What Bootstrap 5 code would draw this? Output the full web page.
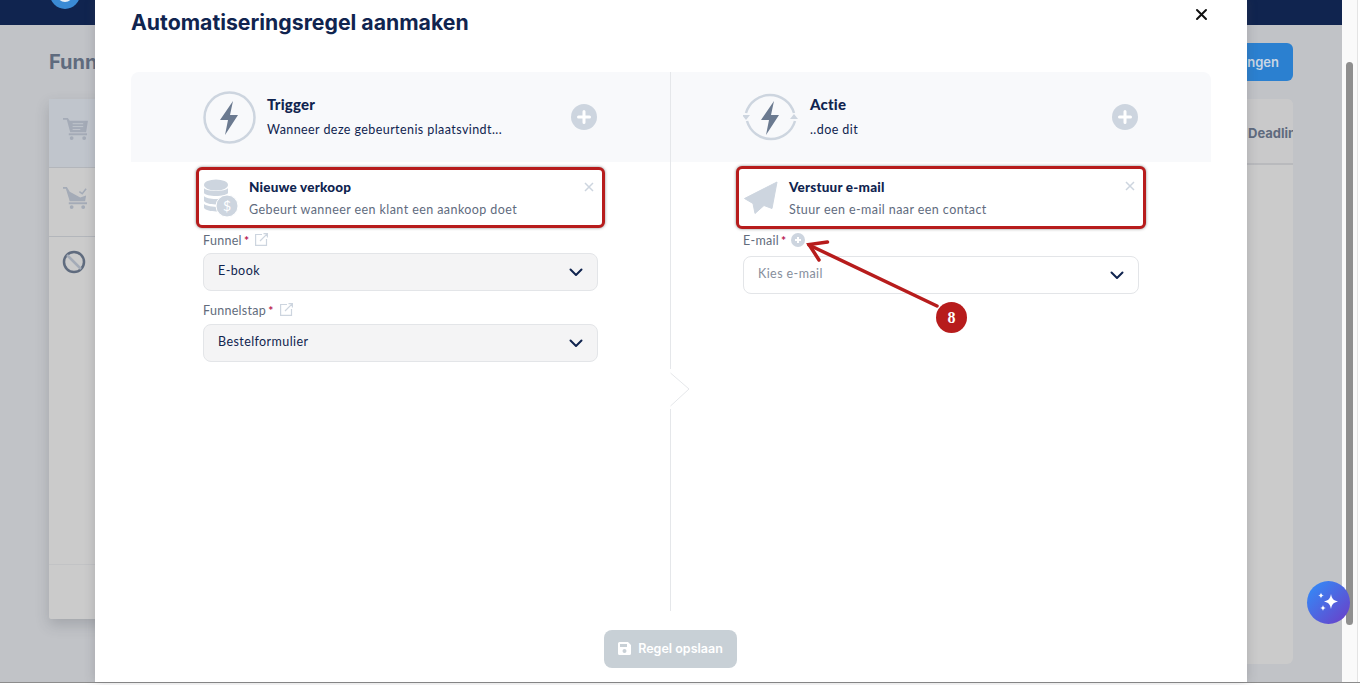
<!DOCTYPE html>
<html lang="nl">
<head>
  <meta charset="UTF-8" />
  <meta name="viewport" content="width=device-width, initial-scale=1" />
  <title>Automatiseringsregel aanmaken</title>
  <link href="https://cdn.jsdelivr.net/npm/bootstrap@5.3.2/dist/css/bootstrap.min.css" rel="stylesheet" />
  <style>
    html, body { height: 100%; overflow: hidden; }
    body { background: #fff; font-family: "Lato", "Liberation Sans", sans-serif; color: #10244f; position: relative; }

    /* pagina achter de modal */
    .app-shell { width: 1342px; height: 682px; background: #c1c3c7; overflow: hidden; }
    .app-bar { height: 25px; background: #10244f; padding-left: 50px; overflow: hidden; }
    .app-logo { width: 30px; height: 30px; margin-top: -21px; border-radius: 50%; background: #3a8ad4; padding: 7px; }
    .app-logo-mark { width: 16px; height: 16px; border-radius: 50%; background: #e6eef6; }
    .app-main { padding: 18px 49px 0; }
    .page-title { font-family: "Inter", sans-serif; font-size: 20px; font-weight: 700; color: #5f6b7e; margin: 0; line-height: 38px; }
    .save-top { width: 120px; height: 38px; background: #2b80d0; border-radius: 6px; font: 600 13px/38px "Inter", sans-serif; color: #c9d6e4; text-align: right; padding-right: 14px; }
    .cards-wrap { margin-top: 18px; gap: 20px; }
    .side-card { width: 600px; height: 520px; background: #cbcbcb; border-radius: 2px; box-shadow: 0 6px 14px rgba(60, 64, 72, .22); }
    .side-row { height: 69px; border-bottom: 1px solid #b3b6bb; padding: 16px 0 0 14px; }
    .side-row.active { background: #c0c5cc; }
    .side-row.tall { height: 328px; padding: 11px 0 0 13px; border-bottom-color: #c2c3c5; }
    .deadline-card { width: 624px; height: 565px; background: #cbcbcb; border-radius: 6px; }
    .deadline-head { height: 66px; border-bottom: 2px solid #b9babd; background: #c9c9ca; border-radius: 6px 6px 0 0; margin-bottom: 3px; }
    .deadline-clip { width: 45px; overflow: hidden; white-space: nowrap; font: 700 13px/68px "Inter", sans-serif; color: #5f6b7e; }

    /* scrollbalk */
    .scroll-track { position: absolute; left: 1342px; top: 0; width: 16px; height: 682px; background: #fafafa; border-right: 1px solid #e4e4e4; }
    .scroll-thumb { position: absolute; left: 4px; top: 62px; width: 7px; height: 563px; border-radius: 4px; background: #8f8f8f; }
    .page-line { position: absolute; left: 0; top: 682px; width: 1360px; height: 1px; background: #8c8c8c; }
    .ai-button { position: absolute; left: 1307px; top: 581px; width: 43px; height: 43px; border-radius: 50%; background: linear-gradient(135deg, #2f90fb, #6d3cc6); }

    /* modal */
    .rule-modal { position: absolute; left: 95px; top: 0; width: 1152px; height: 682px; background: #fff; padding: 0 36px; box-shadow: 0 0 10px rgba(70, 72, 80, .25); }
    .rule-title { font-family: "Inter", sans-serif; font-size: 21.25px; font-weight: 700; color: #10244f; line-height: 44px; margin: 0; height: 72px; }
    .rule-close { position: absolute; left: 1100px; top: 8px; width: 13px; height: 13px; }
    .rule-grid { height: 539px; }
    .rule-col { width: 539px; flex: none; }
    .rule-col + .rule-col { width: 541px; border-left: 1px solid #e5e7ea; position: relative; }
    .rule-head { height: 90px; background: #f8f9fb; padding: 0 72px; }
    .rule-col:first-child .rule-head { border-radius: 8px 0 0 0; }
    .rule-col:last-child .rule-head { border-radius: 0 8px 0 0; }
    .rule-head-text { margin-left: 11px; padding-bottom: 1px; }
    .rule-col + .rule-col .rule-head-text { margin-left: 12px; }
    .rule-head-title { font-size: 15px; font-weight: 900; line-height: 18px; margin-bottom: 9px; letter-spacing: .2px; }
    .rule-head-sub { font-size: 12.5px; line-height: 16px; letter-spacing: .42px; }
    .plus-ico { margin-right: 1px; flex: none; }
    .rule-body { padding: 5px 72px 0; }
    .rule-item { height: 61px; margin: 0 -7px 0 -7px; border: 3px solid #b71c1c; border-radius: 6px; box-shadow: 0 0 3px rgba(40, 40, 40, .55); padding: 0 4px; position: relative; background: #fff; }
    .rule-item.raised { height: 63px; margin-top: -1px; }
    .rule-item-icon { width: 36px; flex: none; margin-right: 10px; }
    .rule-item-text { padding-top: 2px; }
    .rule-item-title { font-size: 13.5px; font-weight: 900; line-height: 17px; margin-bottom: 6px; letter-spacing: .2px; }
    .rule-item-sub { font-size: 12.5px; line-height: 16px; color: #5f6b7e; letter-spacing: .42px; }
    .rule-item-x { position: absolute; right: 8px; top: 12px; width: 10px; height: 10px; }
    .field-label { font-size: 12.5px; line-height: 16px; color: #626c7c; letter-spacing: .3px; height: 25px; padding-top: 5px; display: flex; align-items: flex-start; margin: 0; }
    .field-label.second { margin-top: 8px; padding-top: 4px; }
    .field-label.third { height: 27px; padding-top: 4px; }
    .req { color: #b8174f; margin-left: 2px; font-size: 12px; font-weight: 700; }
    .link-ico { margin-left: 6px; }
    .rule-select.form-select { height: 38px; font-size: 12.5px; letter-spacing: .42px; color: #10244f; background-color: #f4f4f5; border: 1px solid #e3e5e8; border-radius: 8px; padding: 0 14px 2px; box-shadow: none;
      background-image: url("data:image/svg+xml,%3csvg xmlns='http://www.w3.org/2000/svg' viewBox='0 0 14 9'%3e%3cpath fill='none' stroke='%2310244f' stroke-width='2' stroke-linecap='round' stroke-linejoin='round' d='M1.5 1.5 7 7l5.5-5.5'/%3e%3c/svg%3e");
      background-size: 14px 9px; background-position: right 14px center; }
    .rule-select.is-empty { background-color: #fff; color: #868e9c; }
    .rule-notch { position: absolute; left: -1px; top: 297px; width: 22px; height: 40px; background: #fff; }
    .rule-footer { margin-top: 19px; }
    .btn.rule-save { width: 133px; height: 38px; margin-left: -1px; padding: 0 0 2px; background: #c8d0d6; border: 0; border-radius: 8px; color: #fff; font: 600 12.5px "Inter", sans-serif; opacity: 1; gap: 7px; }

    /* annotatie */
    .note-arrow { position: absolute; left: 800px; top: 235px; width: 150px; height: 80px; pointer-events: none; }
    .note-badge { position: absolute; left: 936px; top: 302px; width: 31px; height: 31px; border-radius: 50%; background: #b71c1c; color: #fff; font: 700 16px/31px "Liberation Serif", serif; text-align: center; }
  </style>
</head>
<body>
  <!-- Pagina achter de modal -->
  <div class="app-shell">
    <div class="app-bar"><div class="app-logo"><div class="app-logo-mark"></div></div></div>
    <div class="app-main">
      <div class="d-flex justify-content-between">
        <h1 class="page-title">Funnels</h1>
        <div class="save-top">Instellingen</div>
      </div>
      <div class="d-flex align-items-start cards-wrap">
        <div class="side-card">
          <div class="side-row active">
            <svg width="25" height="25" viewBox="0 0 26 26" fill="#a4abb7"><path d="M0 2h5l2 3h19l-2 12H7.500L4 4H0z"/><path d="M10 8h11M10 11h11M10 14h8" stroke="#c0c5cc"/><rect x="6" y="18" width="19" height="2"/><circle cx="9" cy="23" r="2"/><circle cx="22" cy="23" r="2"/></svg>
          </div>
          <div class="side-row">
            <svg width="25" height="25" viewBox="0 0 26 26" fill="#a4abb7"><path d="M0 2h4l3 5 11 6 6-2-1 6H7L3 4H0z"/><path d="M17 7l3 2 4-5" fill="none" stroke="#a4abb7" stroke-width="1.600"/><rect x="6" y="18" width="19" height="2"/><circle cx="9" cy="23" r="2"/><circle cx="21" cy="23" r="2"/></svg>
          </div>
          <div class="side-row tall">
            <svg width="24" height="24" viewBox="0 0 24 24" fill="none" stroke="#5f6b7e" stroke-width="2.500"><circle cx="12" cy="12" r="10"/><path d="M5 5l14 14" stroke="#a4abb7"/></svg>
          </div>
        </div>
        <div class="deadline-card">
          <div class="deadline-head d-flex justify-content-end"><div class="deadline-clip">Deadlines</div></div>
        </div>
      </div>
    </div>
  </div>

  <div class="scroll-track"><div class="scroll-thumb"></div></div>
  <div class="page-line"></div>

  <!-- Modal -->
  <div class="rule-modal">
    <h2 class="rule-title">Automatiseringsregel aanmaken</h2>
    <svg class="rule-close" viewBox="0 0 13 13"><path d="M2 2l9 9M11 2l-9 9" stroke="#111" stroke-width="2" stroke-linecap="round"/></svg>

    <div class="d-flex rule-grid">
      <!-- Trigger -->
      <div class="rule-col">
        <div class="rule-head d-flex align-items-center">
          <svg width="53" height="53" viewBox="0 0 53 53"><circle cx="26.500" cy="26.500" r="25" fill="none" stroke="#cdd5df" stroke-width="2.500"/><path d="M30 10 17 29h8l-3 15 13-20h-8z" fill="#6b7a90"/></svg>
          <div class="rule-head-text flex-grow-1">
            <div class="rule-head-title">Trigger</div>
            <div class="rule-head-sub">Wanneer deze gebeurtenis plaatsvindt...</div>
          </div>
          <svg class="plus-ico" width="26" height="26" viewBox="0 0 26 26"><circle cx="13" cy="13" r="13" fill="#cdd5df"/><path d="M13 7.500v11M7.500 13h11" stroke="#fff" stroke-width="3" stroke-linecap="round"/></svg>
        </div>
        <div class="rule-body">
          <div class="rule-item d-flex align-items-center">
            <div class="rule-item-icon">
              <svg width="36" height="38" viewBox="0 0 36 38" fill="#cdd5df"><ellipse cx="13" cy="6" rx="12" ry="5.500"/><path d="M1 9c2 4 22 4 24 0v5c-2 4-22 4-24 0zM1 17c2 3 14 4 18 2l-2 6c-6 1-14 0-16-3zM1 25c2 2 9 3 15 3l2 4c-6 1-15 0-17-3z"/><circle cx="24" cy="27" r="11" stroke="#fff" stroke-width="1"/><text x="24" y="32" font-size="14" font-family="Lato, sans-serif" fill="#fff" text-anchor="middle">$</text></svg>
            </div>
            <div class="rule-item-text">
              <div class="rule-item-title">Nieuwe verkoop</div>
              <div class="rule-item-sub">Gebeurt wanneer een klant een aankoop doet</div>
            </div>
            <svg class="rule-item-x" viewBox="0 0 10 10"><path d="M1 1l8 8M9 1 1 9" stroke="#cdd5df" stroke-width="1.500"/></svg>
          </div>
          <label class="field-label">Funnel<span class="req">*</span>
            <svg class="link-ico" width="13" height="13" viewBox="0 0 13 13" fill="none" stroke="#cdd5df" stroke-width="1.200"><path d="M7 1.500H.6v10.900h10.900V6M5 8l7.400-7.400M8.500.6h3.900v3.900"/></svg>
          </label>
          <select class="form-select rule-select"><option>E-book</option></select>
          <label class="field-label second">Funnelstap<span class="req">*</span>
            <svg class="link-ico" width="13" height="13" viewBox="0 0 13 13" fill="none" stroke="#cdd5df" stroke-width="1.200"><path d="M7 1.500H.6v10.900h10.900V6M5 8l7.400-7.400M8.500.6h3.900v3.900"/></svg>
          </label>
          <select class="form-select rule-select"><option>Bestelformulier</option></select>
        </div>
      </div>

      <!-- Actie -->
      <div class="rule-col">
        <div class="rule-head d-flex align-items-center">
          <svg width="55" height="55" viewBox="0 0 55 55" fill="none"><path d="M3 23A25 25 0 0 1 51 23" stroke="#cdd5df" stroke-width="2.500"/><path d="M52 31A25 25 0 0 1 4 31" stroke="#cdd5df" stroke-width="2.500"/><path d="M-1 25h8l-4 5zM47 29h8l-4-5z" fill="#cdd5df"/><path d="M31 11 18 30h8l-3 15 13-20h-8z" fill="#6b7a90"/></svg>
          <div class="rule-head-text flex-grow-1">
            <div class="rule-head-title">Actie</div>
            <div class="rule-head-sub">..doe dit</div>
          </div>
          <svg class="plus-ico" width="26" height="26" viewBox="0 0 26 26"><circle cx="13" cy="13" r="13" fill="#cdd5df"/><path d="M13 7.500v11M7.500 13h11" stroke="#fff" stroke-width="3" stroke-linecap="round"/></svg>
        </div>
        <div class="rule-body">
          <div class="rule-item raised d-flex align-items-center">
            <div class="rule-item-icon">
              <svg width="36" height="34" viewBox="0 0 36 34" fill="#cdd5df" stroke="#cdd5df" stroke-width="1" stroke-linejoin="round"><path d="M34 1 1.500 17.500 10 22.500 12 32.500 21 24.500 29 27.500z"/></svg>
            </div>
            <div class="rule-item-text">
              <div class="rule-item-title">Verstuur e-mail</div>
              <div class="rule-item-sub">Stuur een e-mail naar een contact</div>
            </div>
            <svg class="rule-item-x" viewBox="0 0 10 10"><path d="M1 1l8 8M9 1 1 9" stroke="#cdd5df" stroke-width="1.500"/></svg>
          </div>
          <label class="field-label third">E-mail<span class="req">*</span>
            <svg class="ms-1" width="14" height="14" viewBox="0 0 14 14"><circle cx="7" cy="7" r="7" fill="#cdd5df"/><path d="M7 4v6M4 7h6" stroke="#fff" stroke-width="2"/></svg>
          </label>
          <select class="form-select rule-select is-empty"><option>Kies e-mail</option></select>
        </div>
        <svg class="rule-notch" viewBox="0 0 22 40"><path d="M0.500 4 19 20 0.500 37" fill="none" stroke="#e5e7ea"/></svg>
      </div>
    </div>

    <div class="rule-footer d-flex justify-content-center">
      <button class="btn rule-save d-flex align-items-center justify-content-center" disabled>
        <svg width="13" height="13" viewBox="0 0 13 13" fill="#fff"><path d="M1.500 0H10l3 3v8.500A1.500 1.500 0 0 1 11.500 13h-10A1.500 1.500 0 0 1 0 11.500v-10A1.500 1.500 0 0 1 1.500 0zM2 2v3h7V2zm4.500 5a2 2 0 1 0 0 4 2 2 0 0 0 0-4z" fill-rule="evenodd"/></svg>
        Regel opslaan
      </button>
    </div>
  </div>

  <!-- Annotatie en zwevende knop -->
  <svg class="note-arrow" viewBox="0 0 150 80" fill="none" stroke="#b71c1c" stroke-width="3.500" stroke-linecap="round"><path d="M137 71 9 10"/><path d="M27.500 7 9 9.500 19 25"/></svg>
  <div class="note-badge">8</div>
  <div class="ai-button">
    <svg width="43" height="43" viewBox="0 0 43 43" fill="#fff"><path d="M24 13c1 5 2.500 6.500 7 7.500-4.500 1-6 2.500-7 7.500-1-5-2.500-6.500-7-7.500 4.500-1 6-2.500 7-7.500zM14 11.500c.4 2 1 2.600 3 3-2 .4-2.600 1-3 3-.4-2-1-2.600-3-3 2-.4 2.600-1 3-3zM16 24c.4 2 1 2.600 3 3-2 .4-2.600 1-3 3-.4-2-1-2.600-3-3 2-.4 2.600-1 3-3z"/></svg>
  </div>

  <script src="https://cdn.jsdelivr.net/npm/bootstrap@5.3.2/dist/js/bootstrap.bundle.min.js"></script>
</body>
</html>
